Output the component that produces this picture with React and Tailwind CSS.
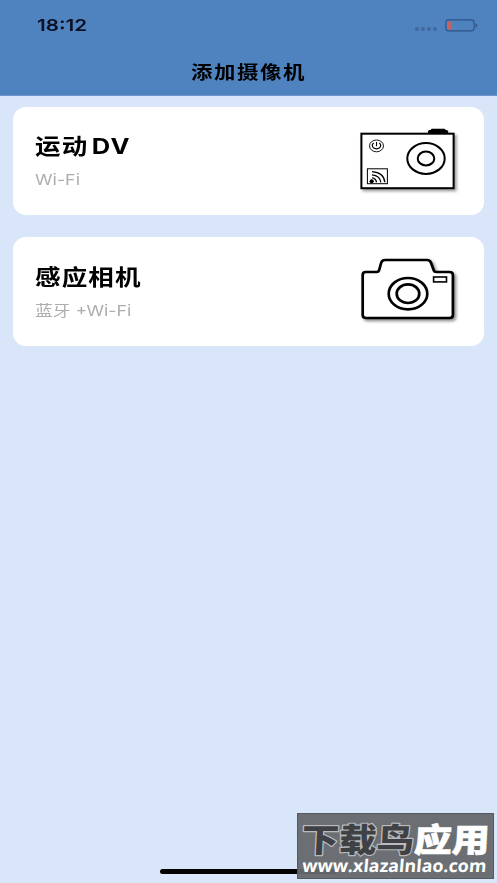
function StatusBar() {
  return (
    <div className="flex h-[50px] items-center justify-between pl-[37px] pr-[19px]">
      <span className="inline-block origin-left scale-x-[1.250] text-[16.500px] font-semibold leading-none text-[#0b1022]">18:12</span>
      <div className="flex items-center gap-2">
        <div className="flex gap-[2px] pt-2">
          {[0, 1, 2, 3].map((dot) => (
            <span key={dot} className="h-[3.5px] w-[4px] rounded-full bg-[#3f699f]" />
          ))}
        </div>
        <svg className="h-[13px] w-[33px]" viewBox="0 0 33 13" fill="none">
          <rect x="0.9" y="0.9" width="28.2" height="11" rx="2.8" stroke="#2f5183" strokeWidth="1.1" />
          <rect x="2.2" y="2.5" width="4" height="8" rx="1.2" fill="#c8625f" />
          <path d="M30.6 4.2c2.200.8 2.200 3.600 0 4.400z" fill="#2f5183" />
        </svg>
      </div>
    </div>
  )
}

function ActionCameraIcon() {
  return (
    <svg className="h-[68px] w-[102px] drop-shadow-[2px_2px_1.5px_rgba(0,0,0,0.4)]" viewBox="0 0 102 68" fill="none" stroke="#000">
      <path d="M70 7V4.500q0-1.500 1.500-1.500h1l1.200-1.200h12.800L87.800 3h.7q1.500 0 1.500 1.500V7z" fill="#000" stroke="none" />
      <rect x="3.400" y="6.700" width="92.200" height="54.500" fill="#fff" strokeWidth="2" />
      <ellipse cx="68" cy="31.500" rx="18.700" ry="15.400" strokeWidth="2" />
      <ellipse cx="68" cy="31.500" rx="8.300" ry="6.900" strokeWidth="2" />
      <ellipse cx="18.500" cy="18.900" rx="7" ry="5.900" strokeWidth="0.9" />
      <path d="M15.800 15.900c-3 2.300-1.200 6 2.700 6s5.700-3.700 2.700-6M18.500 15.100v4.200" strokeWidth="1.100" />
      <rect x="9.400" y="41.800" width="20" height="14.900" strokeWidth="1" />
      <circle cx="13.700" cy="54.300" r="2.100" fill="#000" stroke="none" />
      <path d="M14 50.900q4 .4 4.500 4.400M14 47.800q8 .8 8.800 7.500M14 44.700q12 1 12.800 10.600" strokeWidth="1.300" />
    </svg>
  )
}

function TrailCameraIcon() {
  return (
    <svg className="h-[68px] w-[102px] drop-shadow-[2px_2px_1.5px_rgba(0,0,0,0.45)]" viewBox="0 0 102 68" fill="none" stroke="#000">
      <path
        d="M7.700 15h10.900q1.900 0 2.400-1.500l2.300-8q.8-2.500 3.800-2.500h42q3 0 3.900 2.800l2.800 7.700q.5 1.500 2.400 1.500h13.200q3.500 0 3.500 3v40q0 3-3.500 3H8.200q-3.500 0-3.500-3V18q0-3 3-3z"
        fill="#fff"
        strokeWidth="2.700"
      />
      <ellipse cx="50" cy="36.700" rx="19.300" ry="15.700" strokeWidth="2.700" />
      <ellipse cx="50" cy="36.700" rx="11.300" ry="9.300" strokeWidth="2.700" />
      <rect x="75.600" y="20" width="12.900" height="4.900" strokeWidth="1.600" />
    </svg>
  )
}

function DeviceCard({ title, subtitle, icon }) {
  return (
    <div className="flex h-[108.500px] items-center justify-between rounded-[13px] bg-white pl-[22px] pr-[24px]">
      <div className="flex flex-col items-start gap-[13px] pt-[2px]">
        <h2 className="flex origin-left scale-x-[1.160] gap-[3px] whitespace-nowrap text-[22px] font-bold leading-[24px] tracking-[1px] text-black">{title}</h2>
        <p className="flex origin-left scale-x-[1.190] gap-1 whitespace-nowrap text-[15px] leading-[18px] text-[#adadad]">{subtitle}</p>
      </div>
      {icon}
    </div>
  )
}

function Watermark() {
  return (
    <div className="absolute bottom-[4px] right-[3px] h-[66px] w-[197px] border border-[#55585c] bg-[#65686c]/95">
      <svg className="h-full w-full" viewBox="0 0 197 66">
        <g className="font-['Noto_Sans_CJK_SC',sans-serif] text-[34px] font-black" transform="skewX(-3)">
          <text x="3" y="39" textLength="116" lengthAdjust="spacingAndGlyphs" fill="#3f4144" stroke="#b9babd" strokeWidth="2.500" strokeLinejoin="round" paintOrder="stroke">下载鸟</text>
          <text x="119" y="39" textLength="78" lengthAdjust="spacingAndGlyphs" fill="#fff" stroke="#fff" strokeWidth="0.600">应用</text>
        </g>
        <text x="4" y="60" textLength="190" lengthAdjust="spacingAndGlyphs" fill="#fff" transform="translate(3 0) skewX(-5)" className="font-['Open_Sans',sans-serif] text-[18px] font-bold">www.xlazalnlao.com</text>
      </svg>
    </div>
  )
}

export default function App() {
  return (
    <div className="relative flex h-screen flex-col overflow-hidden bg-[#d9e6fa] font-['Inter','Noto_Sans_CJK_SC',sans-serif]">
      <header className="h-[96px] shrink-0 border-b border-[#6c96cd] bg-[#4e83c0]">
        <StatusBar />
        <h1 className="scale-x-[1.190] pt-[11px] text-center text-[18px] font-bold leading-[24px] tracking-[1.300px] text-black">添加摄像机</h1>
      </header>

      <main className="flex flex-1 flex-col gap-[22px] px-[13px] pt-[10.500px]">
        <DeviceCard title={<><span>运动</span><span>DV</span></>} subtitle="Wi-Fi" icon={<ActionCameraIcon />} />
        <DeviceCard title="感应相机" subtitle={<><span>蓝牙</span><span>+Wi-Fi</span></>} icon={<TrailCameraIcon />} />
      </main>

      {/* Home indicator */}
      <div className="mx-auto mb-[9px] h-[5px] w-[177px] rounded-full bg-black" />
      <Watermark />
    </div>
  )
}
